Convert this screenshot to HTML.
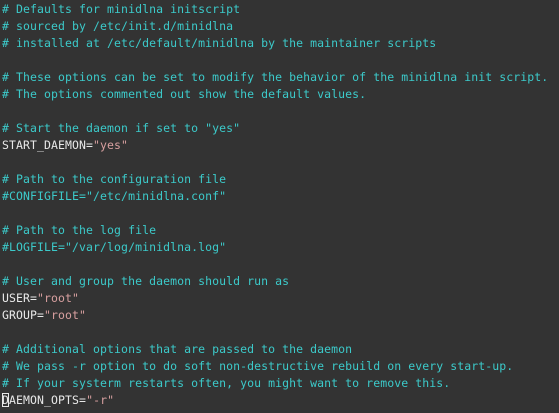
<!DOCTYPE html>
<html><head><style>
html,body{margin:0;padding:0;background:#333333;width:559px;height:413px;overflow:hidden}
pre{margin:0;padding:1px 0 0 2px;font-family:"DejaVu Sans Mono",monospace;font-size:11.5px;line-height:17px;color:#e8e8e8;letter-spacing:0.08px}
.c{color:#3ccaca}
.s{color:#d8a0a0}
.cur{outline:1px solid #e8e8e8;outline-offset:-1px}
</style></head><body><pre><span class="c"># Defaults for minidlna initscript
# sourced by /etc/init.d/minidlna
# installed at /etc/default/minidlna by the maintainer scripts

# These options can be set to modify the behavior of the minidlna init script.
# The options commented out show the default values.

# Start the daemon if set to "yes"</span>
START_DAEMON=<span class="s">"yes"</span>

<span class="c"># Path to the configuration file
#CONFIGFILE="/etc/minidlna.conf"

# Path to the log file
#LOGFILE="/var/log/minidlna.log"

# User and group the daemon should run as</span>
USER=<span class="s">"root"</span>
GROUP=<span class="s">"root"</span>

<span class="c"># Additional options that are passed to the daemon
# We pass -r option to do soft non-destructive rebuild on every start-up.
# If your systerm restarts often, you might want to remove this.</span>
<span class="cur">D</span>AEMON_OPTS=<span class="s">"-r"</span></pre></body></html>
